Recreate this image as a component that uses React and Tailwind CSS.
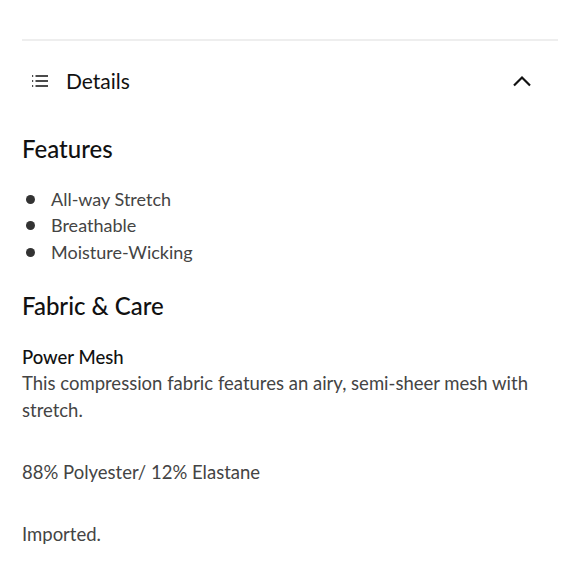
import React from "react";

const ListIcon = () => (
  <svg width="18" height="14" viewBox="0 0 18 14" fill="none" stroke="#111" strokeWidth="1.4">
    <path d="M1 2h1.2M1 7h1.2M1 12h1.2" />
    <path d="M4.5 2H17M4.5 7H17M4.5 12H17" />
  </svg>
);

const ChevronUp = () => (
  <svg width="20" height="12" viewBox="0 0 20 12" fill="none" stroke="#111" strokeWidth="2.2">
    <path d="M2 10.5L10 2.5l8 8" />
  </svg>
);

export default function App() {
  const features = ["All-way Stretch", "Breathable", "Moisture-Wicking"];

  return (
    <div className="w-[580px] h-[580px] bg-white overflow-hidden px-[22px] font-['Lato',sans-serif]">
      <div className="pt-[39px]">
        <div className="h-[2px] bg-[#eeeeee]" />
      </div>

      <div className="flex items-center justify-between h-[80px] pl-[9px] pr-[26px]">
        <div className="flex items-center gap-[17px]">
          <ListIcon />
          <span className="text-[21px] text-[#111]">Details</span>
        </div>
        <ChevronUp />
      </div>

      <h2 className="mt-[12px] text-[24px] leading-[32px] font-medium text-[#111]">Features</h2>

      <ul className="mt-[21px]">
        {features.map((f) => (
          <li key={f} className="flex items-center h-[26.5px] text-[18px] text-[#444]">
            <span className="w-[9px] h-[9px] rounded-full bg-[#333] ml-[4px] mr-[16px]" />
            {f}
          </li>
        ))}
      </ul>

      <h2 className="mt-[24px] text-[24px] leading-[32px] font-medium text-[#111]">Fabric &amp; Care</h2>

      <div className="mt-[22px] text-[18.5px] leading-[26.5px]">
        <p className="font-medium text-[#111]">Power Mesh</p>
        <p className="text-[#444]">This compression fabric features an airy, semi-sheer mesh with stretch.</p>
        <p className="mt-[36px] text-[#444]">88% Polyester/ 12% Elastane</p>
        <p className="mt-[35px] text-[#444]">Imported.</p>
      </div>
    </div>
  );
}
